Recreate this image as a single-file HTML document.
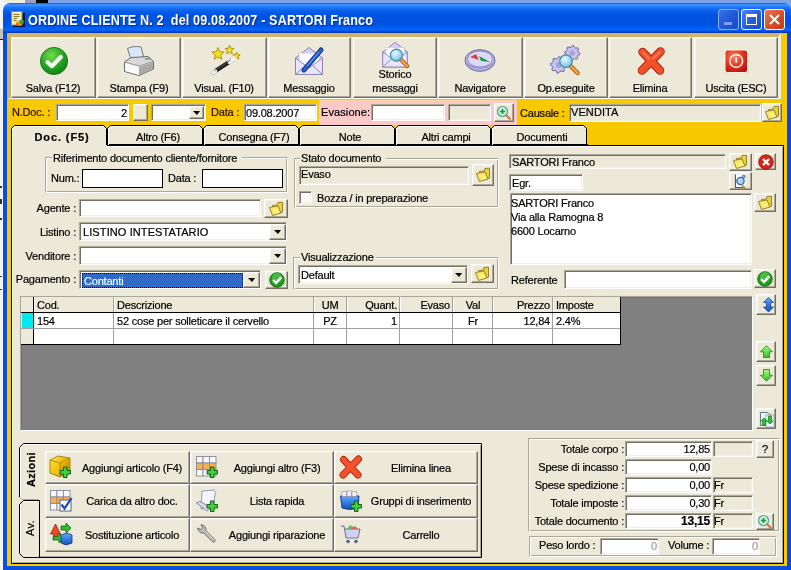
<!DOCTYPE html><html><head><meta charset="utf-8"><style>
*{box-sizing:border-box;margin:0;padding:0}
body{width:791px;height:570px;position:relative;overflow:hidden;font-family:"Liberation Sans",sans-serif;font-size:11px;color:#000;background:#fff}
.a{position:absolute}
.t{position:absolute;white-space:pre;line-height:13px;letter-spacing:-0.2px;-webkit-text-stroke:0.2px}
.sk{border:1px solid;border-color:#aca899 #fff #fff #aca899;box-shadow:inset 1px 1px 0 #716f64,inset -1px -1px 0 #f1efe2}
.rb{background:#ece9d8;border:1px solid;border-color:#fff #716f64 #716f64 #fff;box-shadow:inset -1px -1px 0 #aca899,inset 1px 1px 0 #f4f2e8}
.et{border:1px solid;border-color:#aca899 #fff #fff #aca899;box-shadow:inset 1px 1px 0 #fff,inset -1px -1px 0 #aca899}
.tri{position:absolute;left:50%;top:50%;margin-left:-4px;margin-top:-2px;width:0;height:0;border-left:4px solid transparent;border-right:3px solid transparent;border-top:4px solid #000}
</style></head><body>
<svg width="0" height="0" style="position:absolute"><defs>
<radialGradient id="gG" cx="0.4" cy="0.3" r="0.8"><stop offset="0" stop-color="#6fdc4a"/><stop offset="0.6" stop-color="#1e9e1e"/><stop offset="1" stop-color="#0f7a12"/></radialGradient>
<radialGradient id="gR" cx="0.4" cy="0.3" r="0.8"><stop offset="0" stop-color="#ff7a60"/><stop offset="0.6" stop-color="#e02a1a"/><stop offset="1" stop-color="#b01010"/></radialGradient>
<linearGradient id="gX" x1="0" y1="0" x2="1" y2="1"><stop offset="0" stop-color="#ff7a50"/><stop offset="1" stop-color="#e8301a"/></linearGradient>
<linearGradient id="gLav" x1="0" y1="0" x2="0" y2="1"><stop offset="0" stop-color="#d8d4f8"/><stop offset="1" stop-color="#b4b0e4"/></linearGradient>
<radialGradient id="gMag" cx="0.4" cy="0.35" r="0.7"><stop offset="0" stop-color="#e8fbff"/><stop offset="0.7" stop-color="#8ed2ea"/><stop offset="1" stop-color="#58a8c8"/></radialGradient>
<linearGradient id="gCube" x1="0" y1="0" x2="1" y2="1"><stop offset="0" stop-color="#fff060"/><stop offset="0.5" stop-color="#e8b400"/><stop offset="1" stop-color="#b07800"/></linearGradient>
<linearGradient id="gBlue" x1="0" y1="0" x2="0" y2="1"><stop offset="0" stop-color="#60a8ff"/><stop offset="1" stop-color="#1050c0"/></linearGradient>
<linearGradient id="gGreenA" x1="0" y1="0" x2="0" y2="1"><stop offset="0" stop-color="#a0ff80"/><stop offset="1" stop-color="#30c020"/></linearGradient>
</defs></svg>
<div style="position:absolute;left:0;top:0;width:791px;height:570px;will-change:transform;background:#fff">
<div class="a " style="left:0px;top:0px;width:791px;height:3px;background:#7ea2e6"></div>
<div class="a " style="left:0px;top:0px;width:3px;height:570px;background:#f4f4f0"></div>
<div class="a " style="left:3px;top:0px;width:22px;height:3px;background:#efeede"></div>
<div class="a " style="left:25px;top:0px;width:11px;height:3px;background:#9aa0c0"></div>
<div class="a " style="left:36px;top:0px;width:12px;height:3px;background:#000"></div>
<div class="a " style="left:740px;top:0px;width:51px;height:14px;background:#7ea2e6"></div>
<div class="a " style="left:0px;top:29px;width:3px;height:10px;background:#c4c0b8"></div>
<div class="a " style="left:0px;top:39px;width:3px;height:1px;background:#202020"></div>
<div class="a " style="left:0px;top:186px;width:2px;height:2px;background:#303030"></div>
<div class="a " style="left:0px;top:199px;width:2px;height:5px;background:#303030"></div>
<div class="a " style="left:0px;top:218px;width:2px;height:2px;background:#303030"></div>
<div class="a " style="left:0px;top:276px;width:2px;height:1px;background:#303030"></div>
<div class="a " style="left:0px;top:289px;width:2px;height:1px;background:#303030"></div>
<div class="a " style="left:3px;top:3px;width:788px;height:567px;background:linear-gradient(#0a3cc8 0,#3a8cff 1px,#3d95ff 2px,#2078f8 4px,#0a5eea 8px,#0054e3 12px,#0052e0 22px,#0062f6 26px,#0066ff 27px,#0058ec 28px,#0038b0 29px,#0038b0 30px,#0a4ee0 30px);border-radius:7px 7px 0 0"></div>
<div class="a " style="left:3px;top:33px;width:4px;height:537px;background:#0a4ee0"></div>
<div class="a " style="left:787px;top:33px;width:4px;height:537px;background:#0a46d8"></div>
<svg class="a" style="left:11px;top:11px" width="14" height="16" viewBox="0 0 14 16"><rect x="2" y="2" width="12" height="14" fill="#0a1850"/><rect x="0.5" y="0.5" width="10.5" height="13.5" fill="#f4ecb8" stroke="#a09040" stroke-width="1"/><path d="M2.5 3.5h6M2.5 5.5h6M2.5 7.5h4M2.5 9.5h3" stroke="#8a7a30" stroke-width="1"/><path d="M6 7 L10 6 L9 10 Z" fill="#fff"/><circle cx="7.5" cy="12" r="2.6" fill="#f0c020"/><circle cx="10.5" cy="11" r="2.4" fill="#40a040"/><circle cx="6.5" cy="13.2" r="1.4" fill="#e06020"/></svg>
<div class="t" style="left:28px;top:14px;font-size:14px;font-weight:700;color:#fff;letter-spacing:0.15px;text-shadow:1px 1px 0 #0a2a8a;transform:scaleX(0.9);transform-origin:0 0;-webkit-text-stroke:0">ORDINE CLIENTE N. 2&nbsp; del 09.08.2007 - SARTORI Franco</div>
<div class="a " style="left:718px;top:9px;width:21px;height:21px;border:1px solid #8ab0f4;border-radius:3px;background:linear-gradient(135deg,#3a6ee8,#1f55d4 60%,#1a4cc4)"><div class="a" style="left:5px;top:12px;width:8px;height:3px;background:#7c9ef0"></div></div>
<div class="a " style="left:741px;top:9px;width:21px;height:21px;border:1px solid #fff;border-radius:3px;background:linear-gradient(135deg,#4d82f0,#2159d8 60%,#1a4fc8)"><div class="a" style="left:4px;top:4px;width:11px;height:11px;border:1px solid #fff;border-top-width:3px"></div></div>
<div class="a " style="left:764px;top:9px;width:21px;height:21px;border:1px solid #fff;border-radius:3px;background:linear-gradient(135deg,#e8785a,#d64a22 60%,#c83a18)"><svg class="a" style="left:4px;top:4px" width="11" height="11"><path d="M1 1L10 10M10 1L1 10" stroke="#fff" stroke-width="2"/></svg></div>
<div class="a " style="left:7px;top:33px;width:780px;height:533px;background:#f9c900"></div>
<div class="a " style="left:7px;top:33px;width:774px;height:66px;background:#ece9d8;border-top:4px solid #d2b468;border-left:4px solid #d2b468;border-right:3px solid #f2efe4;border-bottom:1px solid #fff"></div>
<div class="a rb" style="left:11px;top:37px;width:85px;height:61px;"></div>
<div class="t" style="left:-247px;width:600px;text-align:center;top:82px;font-size:11px;font-weight:400;color:#000;">Salva (F12)</div>
<div class="a rb" style="left:97px;top:37px;width:84px;height:61px;"></div>
<div class="t" style="left:-161px;width:600px;text-align:center;top:82px;font-size:11px;font-weight:400;color:#000;">Stampa (F9)</div>
<div class="a rb" style="left:182px;top:37px;width:85px;height:61px;"></div>
<div class="t" style="left:-76px;width:600px;text-align:center;top:82px;font-size:11px;font-weight:400;color:#000;">Visual. (F10)</div>
<div class="a rb" style="left:268px;top:37px;width:83px;height:61px;"></div>
<div class="t" style="left:9px;width:600px;text-align:center;top:82px;font-size:11px;font-weight:400;color:#000;">Messaggio</div>
<div class="a rb" style="left:353px;top:37px;width:84px;height:61px;"></div>
<div class="t" style="left:95px;width:600px;text-align:center;top:68px;font-size:11px;font-weight:400;color:#000;">Storico</div>
<div class="t" style="left:95px;width:600px;text-align:center;top:82px;font-size:11px;font-weight:400;color:#000;">messaggi</div>
<div class="a rb" style="left:438px;top:37px;width:85px;height:61px;"></div>
<div class="t" style="left:180px;width:600px;text-align:center;top:82px;font-size:11px;font-weight:400;color:#000;">Navigatore</div>
<div class="a rb" style="left:524px;top:37px;width:84px;height:61px;"></div>
<div class="t" style="left:266px;width:600px;text-align:center;top:82px;font-size:11px;font-weight:400;color:#000;">Op.eseguite</div>
<div class="a rb" style="left:609px;top:37px;width:83px;height:61px;"></div>
<div class="t" style="left:350px;width:600px;text-align:center;top:82px;font-size:11px;font-weight:400;color:#000;">Elimina</div>
<div class="a rb" style="left:694px;top:37px;width:84px;height:61px;"></div>
<div class="t" style="left:436px;width:600px;text-align:center;top:82px;font-size:11px;font-weight:400;color:#000;">Uscita (ESC)</div>
<svg class="a" style="left:39px;top:46px" width="30" height="30" viewBox="0 0 30 30"><circle cx="15" cy="15" r="13.6" fill="url(#gG)" stroke="#0a6a10" stroke-width="0.8"/><path d="M8.6 16.2 L12.8 20.2 L21.8 11" fill="none" stroke="#f4fff0" stroke-width="4.2" stroke-linecap="round" stroke-linejoin="round"/></svg>
<svg class="a" style="left:122px;top:45px" width="34" height="32" viewBox="0 0 34 32"><path d="M5.5 3.5 C9 1.5 15 1 19 2 L22 13 C17 12 12 13 9 14.5 Z" fill="#dce8f8" stroke="#707888" stroke-width="1"/>
<path d="M2.5 17 L9 12.5 L26 11.5 L31.5 16.5 L31.5 24 L17 30.5 L2.5 26.5 Z" fill="#d8d8d8" stroke="#6a6a6a" stroke-width="1"/>
<path d="M2.5 17 L17 21 L31.5 16.5" fill="none" stroke="#9a9a9a" stroke-width="1"/>
<path d="M3 18 L17 22 L17 30 L3 26 Z" fill="#fafafa"/>
<path d="M17 22 L31 17.5 L31 24 L17 30 Z" fill="#a8a8a8"/>
<path d="M23 14 L28 13.5" stroke="#60a060" stroke-width="1.5"/></svg>
<svg class="a" style="left:210px;top:45px" width="32" height="32" viewBox="0 0 32 32"><polygon points="8.00,2.50 9.72,6.63 14.18,6.99 10.78,9.90 11.82,14.26 8.00,11.93 4.18,14.26 5.22,9.90 1.82,6.99 6.28,6.63" fill="#f4e020" stroke="#b09000" stroke-width="0.9" stroke-linejoin="round"/><polygon points="19.50,0.20 20.77,3.25 24.07,3.52 21.55,5.67 22.32,8.88 19.50,7.16 16.68,8.88 17.45,5.67 14.93,3.52 18.23,3.25" fill="#f4e020" stroke="#b09000" stroke-width="0.9" stroke-linejoin="round"/><polygon points="26.50,7.20 27.51,9.62 30.11,9.83 28.13,11.53 28.73,14.07 26.50,12.71 24.27,14.07 24.87,11.53 22.89,9.83 25.49,9.62" fill="#f4e020" stroke="#b09000" stroke-width="0.9" stroke-linejoin="round"/><path d="M3 27.5 L23 14.5" stroke="#202020" stroke-width="4.4" stroke-linecap="round"/><path d="M3 27.5 L5 26.2" stroke="#f0f0f0" stroke-width="4.4" stroke-linecap="round"/><path d="M19.5 16.8 L24.5 13.5" stroke="#f4f4f4" stroke-width="4.4" stroke-linecap="round"/><path d="M4 26 L21 15" stroke="#606060" stroke-width="0.8"/></svg>
<svg class="a" style="left:294px;top:46px" width="31" height="31" viewBox="0 0 31 31"><path d="M1.5 12 L15 1.5 L28.5 12 L28.5 28.5 L1.5 28.5 Z" fill="#d4d0f4" stroke="#8884b8" stroke-width="1"/>
<rect x="5" y="7" width="20" height="14" fill="#fbfbff" stroke="#c8c0d8" stroke-width="0.6"/>
<path d="M1.5 12 L15 22 L28.5 12 L28.5 28.5 L1.5 28.5 Z" fill="#e8e6fc" stroke="#8884b8" stroke-width="1"/>
<path d="M1.5 28.5 L12 19 M28.5 28.5 L18 19" stroke="#8884b8" stroke-width="1"/><path d="M10 24 L27 4" stroke="#0a2a80" stroke-width="5" stroke-linecap="round"/><path d="M10 24 L27 4" stroke="#2a60d0" stroke-width="3.2" stroke-linecap="round"/><path d="M13 20 L25 6" stroke="#80b0ff" stroke-width="0.9"/></svg>
<svg class="a" style="left:379.5px;top:41px" width="31" height="31" viewBox="0 0 31 34"><path d="M1.5 12 L15 1.5 L28.5 12 L28.5 28.5 L1.5 28.5 Z" fill="#d4d0f4" stroke="#8884b8" stroke-width="1"/>
<rect x="5" y="7" width="20" height="14" fill="#fbfbff" stroke="#c8c0d8" stroke-width="0.6"/>
<path d="M1.5 12 L15 22 L28.5 12 L28.5 28.5 L1.5 28.5 Z" fill="#e8e6fc" stroke="#8884b8" stroke-width="1"/>
<path d="M1.5 28.5 L12 19 M28.5 28.5 L18 19" stroke="#8884b8" stroke-width="1"/><path d="M16.5 15.5 L28.5 27.5" stroke="#a05818" stroke-width="4.4" stroke-linecap="round"/><path d="M16.5 15.5 L28.5 27.5" stroke="#f8a040" stroke-width="2.6" stroke-linecap="round"/><circle cx="16.5" cy="15.5" r="6.6" fill="url(#gMag)" stroke="#4a88a8" stroke-width="1.2"/></svg>
<svg class="a" style="left:464px;top:48px" width="32" height="26" viewBox="0 0 32 26"><ellipse cx="16" cy="12.5" rx="15" ry="10.8" fill="#b8b4e8" stroke="#6a66a0" stroke-width="1"/>
<ellipse cx="16" cy="11" rx="12.5" ry="8" fill="#dcdaf8" stroke="#8c88c0" stroke-width="1"/>
<path d="M6 9 L15 12 L12 6 Z" fill="#d84040"/><path d="M15 8 L26 14 L17 13 Z" fill="#1a9a40"/>
<path d="M2 15 Q16 26 30 15" fill="none" stroke="#9894d0" stroke-width="1.2"/></svg>
<svg class="a" style="left:550px;top:40px" width="34" height="36" viewBox="0 0 34 36"><polygon points="29.90,13.10 29.75,14.58 27.78,15.37 27.23,16.39 27.67,18.47 26.52,19.42 24.57,18.58 23.46,18.91 22.30,20.70 20.82,20.55 20.03,18.58 19.01,18.03 16.93,18.47 15.98,17.32 16.82,15.37 16.49,14.26 14.70,13.10 14.85,11.62 16.82,10.83 17.37,9.81 16.93,7.73 18.08,6.78 20.03,7.62 21.14,7.29 22.30,5.50 23.78,5.65 24.57,7.62 25.59,8.17 27.67,7.73 28.62,8.88 27.78,10.83 28.11,11.94" fill="#c8c4f0" stroke="#6a66a0" stroke-width="1"/><circle cx="22.3" cy="13.1" r="2.66" fill="#a8a4d8"/><polygon points="16.80,25.00 16.64,26.60 14.51,27.45 13.92,28.55 14.40,30.80 13.16,31.82 11.05,30.91 9.85,31.27 8.60,33.20 7.00,33.04 6.15,30.91 5.05,30.32 2.80,30.80 1.78,29.56 2.69,27.45 2.33,26.25 0.40,25.00 0.56,23.40 2.69,22.55 3.28,21.45 2.80,19.20 4.04,18.18 6.15,19.09 7.35,18.73 8.60,16.80 10.20,16.96 11.05,19.09 12.15,19.68 14.40,19.20 15.42,20.44 14.51,22.55 14.87,23.75" fill="#c8c4f0" stroke="#6a66a0" stroke-width="1"/><circle cx="8.6" cy="25" r="2.87" fill="#a8a4d8"/><path d="M16 21.2 L27.5 33" stroke="#a05818" stroke-width="4.4" stroke-linecap="round"/><path d="M16 21.2 L27.5 33" stroke="#f8a040" stroke-width="2.6" stroke-linecap="round"/><circle cx="16" cy="21.2" r="6.3" fill="url(#gMag)" stroke="#4a88a8" stroke-width="1.2"/></svg>
<svg class="a" style="left:637px;top:47px" width="29" height="29" viewBox="0 0 29 29"><path d="M5.5 5 L23 23.5 M23.5 4.5 L5 23.5" stroke="#a82010" stroke-width="8.6" stroke-linecap="round"/><path d="M5.5 5 L23 23.5 M23.5 4.5 L5 23.5" stroke="#f4502a" stroke-width="6.8" stroke-linecap="round"/><path d="M6 5.5 L12 11.5 M22.5 5.5 L16 11.5" stroke="#ff8a60" stroke-width="2" stroke-linecap="round" opacity="0.7"/></svg>
<svg class="a" style="left:724px;top:49px" width="25" height="25" viewBox="0 0 25 25"><rect x="1" y="1" width="22.5" height="22.5" rx="2.5" fill="url(#gR)" stroke="#fff4e0" stroke-width="1"/><circle cx="12.2" cy="12" r="6.4" fill="none" stroke="#fff0d8" stroke-width="1.6"/><path d="M12.2 8.5 V13.8" stroke="#fff0d8" stroke-width="2"/></svg>
<div class="t" style="left:12px;top:106px;font-size:11px;font-weight:400;color:#2a0800;">N.Doc. :</div>
<div class="a sk" style="left:56px;top:104px;width:73px;height:17px;background:#fff"></div>
<div class="t" style="left:-473px;width:600px;text-align:right;top:107px;font-size:11px;font-weight:400;color:#000;">2</div>
<div class="a rb" style="left:133px;top:104px;width:15px;height:17px;"></div>
<div class="a sk" style="left:151px;top:104px;width:55px;height:17px;background:#fff"></div>
<div class="a rb" style="left:189px;top:106px;width:15px;height:13px;"><div class="tri"></div></div>
<div class="t" style="left:211px;top:106px;font-size:11px;font-weight:400;color:#2a0800;">Data :</div>
<div class="a sk" style="left:244px;top:104px;width:73px;height:17px;background:#fff"></div>
<div class="t" style="left:246px;top:107px;font-size:11px;font-weight:400;color:#000;">09.08.2007</div>
<div class="a " style="left:319px;top:100px;width:198px;height:25px;background:#fdc8c8;border-top:2px solid #fbd49a"></div>
<div class="t" style="left:321px;top:106px;font-size:11px;font-weight:400;color:#000;letter-spacing:0.1px;">Evasione:</div>
<div class="a sk" style="left:371px;top:104px;width:74px;height:17px;background:#fff"></div>
<div class="a sk" style="left:448px;top:104px;width:43px;height:17px;background:#ece9d8"></div>
<div class="a rb" style="left:494px;top:103px;width:20px;height:19px;"><div style="position:absolute;left:0;top:0;right:0;bottom:0;display:flex;align-items:center;justify-content:center"><svg width="16" height="16" viewBox="0 0 16 16"><circle cx="6.5" cy="6.5" r="5" fill="#c8f0e8" stroke="#5a9a9a" stroke-width="1.2"/><path d="M4 6.5 H9 M6.5 4 V9" stroke="#10a010" stroke-width="1.6"/><path d="M10 10 L14.5 14.5" stroke="#c08050" stroke-width="2.2"/></svg></div></div>
<div class="t" style="left:520px;top:107px;font-size:11px;font-weight:400;color:#100400;">Causale :</div>
<div class="a sk" style="left:569px;top:104px;width:192px;height:18px;background:#ece9d8"></div>
<div class="t" style="left:571px;top:106px;font-size:11px;font-weight:400;color:#000;letter-spacing:0.1px;">VENDITA</div>
<div class="a rb" style="left:762px;top:103px;width:20px;height:19px;"><div style="position:absolute;left:0;top:0;right:0;bottom:0;display:flex;align-items:center;justify-content:center"><svg width="17" height="16" viewBox="0 0 17 16"><path d="M4.5 4.5 L9.5 4 L10 1.5 L14.5 1.2 L14.5 11.2 L5 13.5 Z" fill="#e8d040" stroke="#8c7a1c" stroke-width="0.9" stroke-linejoin="round"/><path d="M1.5 6.5 L10 5 L13 12 L4.5 14.5 Z" fill="#fbe868" stroke="#8c7a1c" stroke-width="0.9" stroke-linejoin="round"/><path d="M6 9 L10 8.3 L11.5 11.5 L7 12.5 Z" fill="#fff48c" opacity="0.8"/></svg></div></div>
<svg class="a" style="left:11px;top:125px" width="97" height="22" viewBox="0 0 97 22"><path d="M0.5 22 V3.5 L3.5 0.5 H92.5 L95.5 3.5 V22" fill="#ece9d8" stroke="#000"/><path d="M1.5 21 V3.9 L3.9 1.5 H92" fill="none" stroke="#fff"/></svg>
<div class="t" style="left:-238px;width:600px;text-align:center;top:131px;font-size:11px;font-weight:700;color:#000;letter-spacing:0.9px;">Doc. (F5)</div>
<svg class="a" style="left:107px;top:125px" width="97" height="21" viewBox="0 0 97 21"><path d="M0.5 21 V3.5 L3.5 0.5 H92.5 L95.5 3.5 V21" fill="#ece9d8" stroke="#000"/><path d="M0 19.5 H97" stroke="#000"/><path d="M1.5 20 V3.9 L3.9 1.5 H92" fill="none" stroke="#fff"/></svg>
<div class="t" style="left:-142px;width:600px;text-align:center;top:131px;font-size:11px;font-weight:400;color:#000;">Altro (F6)</div>
<svg class="a" style="left:203px;top:125px" width="97" height="21" viewBox="0 0 97 21"><path d="M0.5 21 V3.5 L3.5 0.5 H92.5 L95.5 3.5 V21" fill="#ece9d8" stroke="#000"/><path d="M0 19.5 H97" stroke="#000"/><path d="M1.5 20 V3.9 L3.9 1.5 H92" fill="none" stroke="#fff"/></svg>
<div class="t" style="left:-46px;width:600px;text-align:center;top:131px;font-size:11px;font-weight:400;color:#000;">Consegna (F7)</div>
<svg class="a" style="left:299px;top:125px" width="97" height="21" viewBox="0 0 97 21"><path d="M0.5 21 V3.5 L3.5 0.5 H92.5 L95.5 3.5 V21" fill="#ece9d8" stroke="#000"/><path d="M0 19.5 H97" stroke="#000"/><path d="M1.5 20 V3.9 L3.9 1.5 H92" fill="none" stroke="#fff"/></svg>
<div class="t" style="left:50px;width:600px;text-align:center;top:131px;font-size:11px;font-weight:400;color:#000;">Note</div>
<svg class="a" style="left:395px;top:125px" width="97" height="21" viewBox="0 0 97 21"><path d="M0.5 21 V3.5 L3.5 0.5 H92.5 L95.5 3.5 V21" fill="#ece9d8" stroke="#000"/><path d="M0 19.5 H97" stroke="#000"/><path d="M1.5 20 V3.9 L3.9 1.5 H92" fill="none" stroke="#fff"/></svg>
<div class="t" style="left:146px;width:600px;text-align:center;top:131px;font-size:11px;font-weight:400;color:#000;">Altri campi</div>
<svg class="a" style="left:491px;top:125px" width="97" height="21" viewBox="0 0 97 21"><path d="M0.5 21 V3.5 L3.5 0.5 H92.5 L95.5 3.5 V21" fill="#ece9d8" stroke="#000"/><path d="M0 19.5 H97" stroke="#000"/><path d="M1.5 20 V3.9 L3.9 1.5 H92" fill="none" stroke="#fff"/></svg>
<div class="t" style="left:242px;width:600px;text-align:center;top:131px;font-size:11px;font-weight:400;color:#000;">Documenti</div>
<div class="a " style="left:11px;top:145px;width:773px;height:419px;background:#ece9d8;border:1px solid #000;box-shadow:inset 1px 1px 0 #fff,inset -1px -1px 0 #aca899"></div>
<div class="a " style="left:12px;top:145px;width:95px;height:2px;background:#ece9d8"></div>
<div class="a " style="left:12px;top:145px;width:1px;height:2px;background:#fff"></div>
<div class="a et" style="left:45px;top:157px;width:243px;height:36px;"></div>
<div class="a " style="left:52px;top:152px;width:190px;height:10px;background:#ece9d8"></div>
<div class="t" style="left:53px;top:152px;font-size:11px;font-weight:400;color:#000;">Riferimento documento cliente/fornitore</div>
<div class="t" style="left:51px;top:172px;font-size:11px;font-weight:400;color:#000;">Num.:</div>
<div class="a " style="left:82px;top:169px;width:81px;height:19px;background:#fff;border:1px solid #000"></div>
<div class="t" style="left:168px;top:172px;font-size:11px;font-weight:400;color:#000;">Data :</div>
<div class="a " style="left:202px;top:169px;width:81px;height:19px;background:#fff;border:1px solid #000"></div>
<div class="t" style="left:-524px;width:600px;text-align:right;top:202px;font-size:11px;font-weight:400;color:#000;">Agente :</div>
<div class="a sk" style="left:79px;top:199px;width:182px;height:18px;background:#fff"></div>
<div class="a rb" style="left:264px;top:199px;width:24px;height:19px;"><div style="position:absolute;left:0;top:0;right:0;bottom:0;display:flex;align-items:center;justify-content:center"><svg width="17" height="16" viewBox="0 0 17 16"><path d="M4.5 4.5 L9.5 4 L10 1.5 L14.5 1.2 L14.5 11.2 L5 13.5 Z" fill="#e8d040" stroke="#8c7a1c" stroke-width="0.9" stroke-linejoin="round"/><path d="M1.5 6.5 L10 5 L13 12 L4.5 14.5 Z" fill="#fbe868" stroke="#8c7a1c" stroke-width="0.9" stroke-linejoin="round"/><path d="M6 9 L10 8.3 L11.5 11.5 L7 12.5 Z" fill="#fff48c" opacity="0.8"/></svg></div></div>
<div class="t" style="left:-524px;width:600px;text-align:right;top:226px;font-size:11px;font-weight:400;color:#000;">Listino :</div>
<div class="a sk" style="left:79px;top:222px;width:208px;height:19px;background:#fff"></div>
<div class="t" style="left:83px;top:226px;font-size:11px;font-weight:400;color:#000;letter-spacing:0.1px;">LISTINO INTESTATARIO</div>
<div class="a rb" style="left:269px;top:224px;width:17px;height:16px;"><div class="tri"></div></div>
<div class="t" style="left:-524px;width:600px;text-align:right;top:250px;font-size:11px;font-weight:400;color:#000;">Venditore :</div>
<div class="a sk" style="left:79px;top:246px;width:208px;height:19px;background:#fff"></div>
<div class="a rb" style="left:269px;top:248px;width:17px;height:16px;"><div class="tri"></div></div>
<div class="t" style="left:-524px;width:600px;text-align:right;top:273px;font-size:11px;font-weight:400;color:#000;">Pagamento :</div>
<div class="a sk" style="left:79px;top:270px;width:182px;height:19px;background:#fff"></div>
<div class="a " style="left:82px;top:273px;width:161px;height:15px;background:#316ac5;outline:1px dotted #000;outline-offset:-1px"></div>
<div class="t" style="left:84px;top:275px;font-size:11px;font-weight:400;color:#eaffff;">Contanti</div>
<div class="a rb" style="left:243px;top:272px;width:17px;height:16px;"><div class="tri"></div></div>
<div class="a rb" style="left:265px;top:271px;width:23px;height:18px;"><div style="position:absolute;left:0;top:0;right:0;bottom:0;display:flex;align-items:center;justify-content:center"><svg width="16" height="16" viewBox="0 0 16 16"><circle cx="8" cy="8" r="7.3" fill="#1f9a1f" stroke="#0c6a0c" stroke-width="0.8"/><circle cx="8" cy="6" r="5" fill="#5fd05f" opacity="0.6"/><path d="M4 8.2 L7 11 L12.2 5.2" fill="none" stroke="#fff" stroke-width="2.4"/></svg></div></div>
<div class="a et" style="left:294px;top:158px;width:205px;height:50px;"></div>
<div class="a " style="left:300px;top:153px;width:86px;height:10px;background:#ece9d8"></div>
<div class="t" style="left:301px;top:152px;font-size:11px;font-weight:400;color:#000;">Stato documento</div>
<div class="a sk" style="left:299px;top:166px;width:170px;height:19px;background:#ece9d8"></div>
<div class="t" style="left:301px;top:168px;font-size:11px;font-weight:400;color:#000;">Evaso</div>
<div class="a rb" style="left:472px;top:164px;width:22px;height:22px;"><div style="position:absolute;left:0;top:0;right:0;bottom:0;display:flex;align-items:center;justify-content:center"><svg width="17" height="16" viewBox="0 0 17 16"><path d="M4.5 4.5 L9.5 4 L10 1.5 L14.5 1.2 L14.5 11.2 L5 13.5 Z" fill="#e8d040" stroke="#8c7a1c" stroke-width="0.9" stroke-linejoin="round"/><path d="M1.5 6.5 L10 5 L13 12 L4.5 14.5 Z" fill="#fbe868" stroke="#8c7a1c" stroke-width="0.9" stroke-linejoin="round"/><path d="M6 9 L10 8.3 L11.5 11.5 L7 12.5 Z" fill="#fff48c" opacity="0.8"/></svg></div></div>
<div class="a sk" style="left:299px;top:191px;width:13px;height:13px;background:#fff"></div>
<div class="t" style="left:317px;top:192px;font-size:11px;font-weight:400;color:#000;">Bozza / in preparazione</div>
<div class="a et" style="left:293px;top:257px;width:206px;height:33px;"></div>
<div class="a " style="left:300px;top:252px;width:76px;height:10px;background:#ece9d8"></div>
<div class="t" style="left:301px;top:251px;font-size:11px;font-weight:400;color:#000;">Visualizzazione</div>
<div class="a sk" style="left:298px;top:265px;width:170px;height:19px;background:#fff"></div>
<div class="t" style="left:301px;top:269px;font-size:11px;font-weight:400;color:#000;">Default</div>
<div class="a rb" style="left:451px;top:267px;width:16px;height:16px;"><div class="tri"></div></div>
<div class="a rb" style="left:471px;top:264px;width:23px;height:19px;"><div style="position:absolute;left:0;top:0;right:0;bottom:0;display:flex;align-items:center;justify-content:center"><svg width="17" height="16" viewBox="0 0 17 16"><path d="M4.5 4.5 L9.5 4 L10 1.5 L14.5 1.2 L14.5 11.2 L5 13.5 Z" fill="#e8d040" stroke="#8c7a1c" stroke-width="0.9" stroke-linejoin="round"/><path d="M1.5 6.5 L10 5 L13 12 L4.5 14.5 Z" fill="#fbe868" stroke="#8c7a1c" stroke-width="0.9" stroke-linejoin="round"/><path d="M6 9 L10 8.3 L11.5 11.5 L7 12.5 Z" fill="#fff48c" opacity="0.8"/></svg></div></div>
<div class="a sk" style="left:509px;top:154px;width:217px;height:15px;background:#ece9d8"></div>
<div class="t" style="left:512px;top:156px;font-size:11px;font-weight:400;color:#000;">SARTORI Franco</div>
<div class="a rb" style="left:729px;top:153px;width:23px;height:18px;"><div style="position:absolute;left:0;top:0;right:0;bottom:0;display:flex;align-items:center;justify-content:center"><svg width="17" height="16" viewBox="0 0 17 16"><path d="M4.5 4.5 L9.5 4 L10 1.5 L14.5 1.2 L14.5 11.2 L5 13.5 Z" fill="#e8d040" stroke="#8c7a1c" stroke-width="0.9" stroke-linejoin="round"/><path d="M1.5 6.5 L10 5 L13 12 L4.5 14.5 Z" fill="#fbe868" stroke="#8c7a1c" stroke-width="0.9" stroke-linejoin="round"/><path d="M6 9 L10 8.3 L11.5 11.5 L7 12.5 Z" fill="#fff48c" opacity="0.8"/></svg></div></div>
<div class="a rb" style="left:755px;top:153px;width:21px;height:17px;"><div style="position:absolute;left:0;top:0;right:0;bottom:0;display:flex;align-items:center;justify-content:center"><svg width="16" height="16" viewBox="0 0 16 16"><circle cx="8" cy="8" r="7.3" fill="#d8241a" stroke="#9a1010" stroke-width="0.8"/><path d="M5 5 L11 11 M11 5 L5 11" stroke="#fff" stroke-width="2.4"/></svg></div></div>
<div class="a sk" style="left:509px;top:174px;width:74px;height:17px;background:#fff"></div>
<div class="t" style="left:512px;top:177px;font-size:11px;font-weight:400;color:#000;">Egr.</div>
<div class="a rb" style="left:729px;top:172px;width:23px;height:18px;"><div style="position:absolute;left:0;top:0;right:0;bottom:0;display:flex;align-items:center;justify-content:center"><svg width="16" height="16" viewBox="0 0 16 16"><path d="M2.5 1.5 V14.5 H13" fill="none" stroke="#505868" stroke-width="1.2"/><rect x="3" y="1.5" width="10" height="12.5" fill="#f8fbff"/><path d="M9 12 L12.5 15.5" stroke="#d09060" stroke-width="2"/><circle cx="7.5" cy="8" r="3.6" fill="#b0d4f4" stroke="#3a6aa8" stroke-width="1.4"/><circle cx="10.8" cy="3.6" r="1.5" fill="#80b0e0" stroke="#3a6aa8" stroke-width="0.8"/></svg></div></div>
<div class="a sk" style="left:510px;top:193px;width:242px;height:72px;background:#fff"></div>
<div class="t" style="left:511px;top:197px;font-size:11px;font-weight:400;color:#000;">SARTORI Franco</div>
<div class="t" style="left:511px;top:211px;font-size:11px;font-weight:400;color:#000;">Via alla Ramogna 8</div>
<div class="t" style="left:511px;top:225px;font-size:11px;font-weight:400;color:#000;">6600 Locarno</div>
<div class="a rb" style="left:754px;top:193px;width:22px;height:19px;"><div style="position:absolute;left:0;top:0;right:0;bottom:0;display:flex;align-items:center;justify-content:center"><svg width="17" height="16" viewBox="0 0 17 16"><path d="M4.5 4.5 L9.5 4 L10 1.5 L14.5 1.2 L14.5 11.2 L5 13.5 Z" fill="#e8d040" stroke="#8c7a1c" stroke-width="0.9" stroke-linejoin="round"/><path d="M1.5 6.5 L10 5 L13 12 L4.5 14.5 Z" fill="#fbe868" stroke="#8c7a1c" stroke-width="0.9" stroke-linejoin="round"/><path d="M6 9 L10 8.3 L11.5 11.5 L7 12.5 Z" fill="#fff48c" opacity="0.8"/></svg></div></div>
<div class="t" style="left:511px;top:274px;font-size:11px;font-weight:400;color:#000;">Referente</div>
<div class="a sk" style="left:564px;top:270px;width:188px;height:19px;background:#fff"></div>
<div class="a rb" style="left:754px;top:269px;width:22px;height:19px;"><div style="position:absolute;left:0;top:0;right:0;bottom:0;display:flex;align-items:center;justify-content:center"><svg width="16" height="16" viewBox="0 0 16 16"><circle cx="8" cy="8" r="7.3" fill="#1f9a1f" stroke="#0c6a0c" stroke-width="0.8"/><circle cx="8" cy="6" r="5" fill="#5fd05f" opacity="0.6"/><path d="M4 8.2 L7 11 L12.2 5.2" fill="none" stroke="#fff" stroke-width="2.4"/></svg></div></div>
<div class="a " style="left:20px;top:296px;width:733px;height:135px;background:#808080;border:1px solid;border-color:#aca899 #fff #fff #aca899;box-shadow:inset 1px 1px 0 #716f64"></div>
<div class="a " style="left:21px;top:297px;width:599px;height:15px;background:#ece9d8"></div>
<div class="a " style="left:21px;top:312px;width:599px;height:33px;background:#fff"></div>
<div class="a " style="left:21px;top:312px;width:12px;height:33px;background:#ece9d8"></div>
<div class="a " style="left:22px;top:313px;width:11px;height:16px;background:#00e8f0"></div>
<div class="a " style="left:33px;top:297px;width:1px;height:48px;background:#a0a0a0"></div>
<div class="a " style="left:34px;top:297px;width:1px;height:15px;background:#fff"></div>
<div class="a " style="left:113px;top:297px;width:1px;height:48px;background:#a0a0a0"></div>
<div class="a " style="left:114px;top:297px;width:1px;height:15px;background:#fff"></div>
<div class="a " style="left:313px;top:297px;width:1px;height:48px;background:#a0a0a0"></div>
<div class="a " style="left:314px;top:297px;width:1px;height:15px;background:#fff"></div>
<div class="a " style="left:346px;top:297px;width:1px;height:48px;background:#a0a0a0"></div>
<div class="a " style="left:347px;top:297px;width:1px;height:15px;background:#fff"></div>
<div class="a " style="left:399px;top:297px;width:1px;height:48px;background:#a0a0a0"></div>
<div class="a " style="left:400px;top:297px;width:1px;height:15px;background:#fff"></div>
<div class="a " style="left:452px;top:297px;width:1px;height:48px;background:#a0a0a0"></div>
<div class="a " style="left:453px;top:297px;width:1px;height:15px;background:#fff"></div>
<div class="a " style="left:492px;top:297px;width:1px;height:48px;background:#a0a0a0"></div>
<div class="a " style="left:493px;top:297px;width:1px;height:15px;background:#fff"></div>
<div class="a " style="left:552px;top:297px;width:1px;height:48px;background:#a0a0a0"></div>
<div class="a " style="left:553px;top:297px;width:1px;height:15px;background:#fff"></div>
<div class="a " style="left:33px;top:297px;width:1px;height:48px;background:#000"></div>
<div class="a " style="left:21px;top:312px;width:599px;height:1px;background:#000"></div>
<div class="a " style="left:21px;top:328px;width:599px;height:1px;background:#a0a0a0"></div>
<div class="a " style="left:21px;top:344px;width:600px;height:1px;background:#000"></div>
<div class="a " style="left:620px;top:297px;width:1px;height:48px;background:#000"></div>
<div class="t" style="left:37px;top:299px;font-size:11px;font-weight:400;color:#000;">Cod.</div>
<div class="t" style="left:37px;top:315px;font-size:11px;font-weight:400;color:#000;">154</div>
<div class="t" style="left:117px;top:299px;font-size:11px;font-weight:400;color:#000;">Descrizione</div>
<div class="t" style="left:117px;top:315px;font-size:11px;font-weight:400;color:#000;">52 cose per solleticare il cervello</div>
<div class="t" style="left:30px;width:600px;text-align:center;top:299px;font-size:11px;font-weight:400;color:#000;">UM</div>
<div class="t" style="left:30px;width:600px;text-align:center;top:315px;font-size:11px;font-weight:400;color:#000;">PZ</div>
<div class="t" style="left:-203px;width:600px;text-align:right;top:299px;font-size:11px;font-weight:400;color:#000;">Quant.</div>
<div class="t" style="left:-203px;width:600px;text-align:right;top:315px;font-size:11px;font-weight:400;color:#000;">1</div>
<div class="t" style="left:-150px;width:600px;text-align:right;top:299px;font-size:11px;font-weight:400;color:#000;">Evaso</div>
<div class="t" style="left:173px;width:600px;text-align:center;top:299px;font-size:11px;font-weight:400;color:#000;">Val</div>
<div class="t" style="left:173px;width:600px;text-align:center;top:315px;font-size:11px;font-weight:400;color:#000;">Fr</div>
<div class="t" style="left:-50px;width:600px;text-align:right;top:299px;font-size:11px;font-weight:400;color:#000;">Prezzo</div>
<div class="t" style="left:-50px;width:600px;text-align:right;top:315px;font-size:11px;font-weight:400;color:#000;">12,84</div>
<div class="t" style="left:556px;top:299px;font-size:11px;font-weight:400;color:#000;">Imposte</div>
<div class="t" style="left:556px;top:315px;font-size:11px;font-weight:400;color:#000;">2.4%</div>
<div class="a rb" style="left:756px;top:294px;width:20px;height:21px;"></div>
<div class="a rb" style="left:756px;top:341px;width:20px;height:21px;"></div>
<div class="a rb" style="left:756px;top:365px;width:20px;height:21px;"></div>
<div class="a rb" style="left:756px;top:408px;width:20px;height:21px;"></div>
<svg class="a" style="left:762px;top:297px" width="13" height="16" viewBox="0 0 13 16"><path d="M6.5 0.5 L11.5 5.5 L8.5 5.5 L8.5 10 L11.5 10 L6.5 15 L1.5 10 L4.5 10 L4.5 5.5 L1.5 5.5 Z" fill="url(#gBlue)" stroke="#1040a0" stroke-width="0.8" stroke-linejoin="round"/></svg>
<svg class="a" style="left:760px;top:345px" width="13" height="13" viewBox="0 0 13 13"><path d="M6.5 0.8 L12.5 6.8 L9.5 6.8 L9.5 12.5 L3.5 12.5 L3.5 6.8 L0.5 6.8 Z" fill="url(#gGreenA)" stroke="#208010" stroke-width="0.8" stroke-linejoin="round"/></svg>
<svg class="a" style="left:760px;top:369px" width="13" height="13" viewBox="0 0 13 13"><path d="M6.5 12.2 L12.5 6.2 L9.5 6.2 L9.5 0.5 L3.5 0.5 L3.5 6.2 L0.5 6.2 Z" fill="url(#gGreenA)" stroke="#208010" stroke-width="0.8" stroke-linejoin="round"/></svg>
<svg class="a" style="left:759px;top:411px" width="16" height="17" viewBox="0 0 16 17"><path d="M1.5 1.5 L9 1.5 L12 4.5 L12 14.5 L1.5 14.5 Z" fill="#e0f4fc" stroke="#606878" stroke-width="0.9"/><path d="M7 4 L15 4 L15 16 L7 16 Z" fill="#e8f8ff" stroke="#707888" stroke-width="0.6"/><path d="M5 7 L8 10 L6.5 10 L6.5 14 L3.5 14 L3.5 10 L2 10 Z" fill="#30c030" stroke="#108010" stroke-width="0.7"/><path d="M11 13 L14 10 L12.5 10 L12.5 5 L9.5 5 L9.5 10 L8 10 Z" fill="#30c030" stroke="#108010" stroke-width="0.7"/></svg>
<svg class="a" style="left:0;top:0" width="791" height="570"><path d="M19.5 497 V447.5 L23.5 443.5 H481.5 V557.5 H23.5 L19.5 553.5 V504.5 L23.5 500.5 H39.5 V557.5" fill="#ece9d8" stroke="#000"/><path d="M480.5 445 V556.5 H40" fill="none" stroke="#aca899"/><path d="M19.5 497 L22 499.5 H39" fill="none" stroke="#aca899"/><path d="M20.5 497 V448 L24 444.5 H481" fill="none" stroke="#fff"/><path d="M20.5 504.5 V553 M24 501.5 H38.5" fill="none" stroke="#fff"/></svg>
<div class="t" style="left:25px;top:487px;font-weight:700;transform:rotate(-90deg);transform-origin:0 0;letter-spacing:0.3px">Azioni</div>
<div class="t" style="left:24px;top:536px;transform:rotate(-90deg);transform-origin:0 0;letter-spacing:0.4px">Av.</div>
<div class="a rb" style="left:45px;top:451px;width:145px;height:33px;"></div>
<div class="t" style="left:-168px;width:600px;text-align:center;top:462px;font-size:11px;font-weight:400;color:#000;">Aggiungi articolo (F4)</div>
<div class="a rb" style="left:190px;top:451px;width:144px;height:33px;"></div>
<div class="t" style="left:-23px;width:600px;text-align:center;top:462px;font-size:11px;font-weight:400;color:#000;">Aggiungi altro (F3)</div>
<div class="a rb" style="left:334px;top:451px;width:144px;height:33px;"></div>
<div class="t" style="left:121px;width:600px;text-align:center;top:462px;font-size:11px;font-weight:400;color:#000;">Elimina linea</div>
<div class="a rb" style="left:45px;top:484px;width:145px;height:34px;"></div>
<div class="t" style="left:-168px;width:600px;text-align:center;top:495px;font-size:11px;font-weight:400;color:#000;">Carica da altro doc.</div>
<div class="a rb" style="left:190px;top:484px;width:144px;height:34px;"></div>
<div class="t" style="left:-23px;width:600px;text-align:center;top:495px;font-size:11px;font-weight:400;color:#000;">Lista rapida</div>
<div class="a rb" style="left:334px;top:484px;width:144px;height:34px;"></div>
<div class="t" style="left:121px;width:600px;text-align:center;top:495px;font-size:11px;font-weight:400;color:#000;">Gruppi di inserimento</div>
<div class="a rb" style="left:45px;top:518px;width:145px;height:34px;"></div>
<div class="t" style="left:-168px;width:600px;text-align:center;top:529px;font-size:11px;font-weight:400;color:#000;">Sostituzione articolo</div>
<div class="a rb" style="left:190px;top:518px;width:144px;height:34px;"></div>
<div class="t" style="left:-23px;width:600px;text-align:center;top:529px;font-size:11px;font-weight:400;color:#000;">Aggiungi riparazione</div>
<div class="a rb" style="left:334px;top:518px;width:144px;height:34px;"></div>
<div class="t" style="left:121px;width:600px;text-align:center;top:529px;font-size:11px;font-weight:400;color:#000;">Carrello</div>
<svg class="a" style="left:48px;top:455px" width="24" height="24" viewBox="0 0 24 24"><path d="M2 5 L10 1 L22 3 L22 17 L12 22 L2 18 Z" fill="url(#gCube)" stroke="#9a7000" stroke-width="0.8"/><path d="M2 5 L12 8 L22 3 M12 8 V22" fill="none" stroke="#b08400" stroke-width="0.8"/><path d="M3 6 L11 8.5 L11 20.5 L3 17.5 Z" fill="#f8d020" opacity="0.6"/><path d="M15.5 12 h3.5 v3.5 h3.5 v3.5 h-3.5 v3.5 h-3.5 v-3.5 h-3.5 v-3.5 h3.5 Z" fill="#40d040" stroke="#106010" stroke-width="1" stroke-linejoin="round"/></svg>
<svg class="a" style="left:195px;top:455px" width="24" height="24" viewBox="0 0 24 24"><rect x="1.5" y="1.5" width="6.5" height="6.5" fill="#f8f8ff" stroke="#8a8aa0" stroke-width="0.9"/><rect x="8.0" y="1.5" width="6.5" height="6.5" fill="#f8f8ff" stroke="#8a8aa0" stroke-width="0.9"/><rect x="14.5" y="1.5" width="6.5" height="6.5" fill="#f8f8ff" stroke="#8a8aa0" stroke-width="0.9"/><rect x="1.5" y="8.0" width="6.5" height="6.5" fill="#f8b050" stroke="#8a8aa0" stroke-width="0.9"/><rect x="8.0" y="8.0" width="6.5" height="6.5" fill="#f8b050" stroke="#8a8aa0" stroke-width="0.9"/><rect x="14.5" y="8.0" width="6.5" height="6.5" fill="#f8b050" stroke="#8a8aa0" stroke-width="0.9"/><rect x="1.5" y="14.5" width="6.5" height="6.5" fill="#f8f8ff" stroke="#8a8aa0" stroke-width="0.9"/><rect x="8.0" y="14.5" width="6.5" height="6.5" fill="#f8f8ff" stroke="#8a8aa0" stroke-width="0.9"/><rect x="14.5" y="14.5" width="6.5" height="6.5" fill="#f8f8ff" stroke="#8a8aa0" stroke-width="0.9"/><path d="M15.5 12 h3.5 v3.5 h3.5 v3.5 h-3.5 v3.5 h-3.5 v-3.5 h-3.5 v-3.5 h3.5 Z" fill="#40d040" stroke="#106010" stroke-width="1" stroke-linejoin="round"/></svg>
<svg class="a" style="left:339px;top:455px" width="24" height="24" viewBox="0 0 24 24"><path d="M4.5 4.5 L19 20 M19.5 4 L4 20" stroke="#a82010" stroke-width="7" stroke-linecap="round"/><path d="M4.5 4.5 L19 20 M19.5 4 L4 20" stroke="#f4502a" stroke-width="5.4" stroke-linecap="round"/></svg>
<svg class="a" style="left:49px;top:489px" width="24" height="24" viewBox="0 0 24 24"><rect x="1.5" y="1.5" width="6.5" height="6.5" fill="#f8f8ff" stroke="#8a8aa0" stroke-width="0.9"/><rect x="8.0" y="1.5" width="6.5" height="6.5" fill="#f8f8ff" stroke="#8a8aa0" stroke-width="0.9"/><rect x="14.5" y="1.5" width="6.5" height="6.5" fill="#f8f8ff" stroke="#8a8aa0" stroke-width="0.9"/><rect x="1.5" y="8.0" width="6.5" height="6.5" fill="#f8b050" stroke="#8a8aa0" stroke-width="0.9"/><rect x="8.0" y="8.0" width="6.5" height="6.5" fill="#f8b050" stroke="#8a8aa0" stroke-width="0.9"/><rect x="14.5" y="8.0" width="6.5" height="6.5" fill="#f8b050" stroke="#8a8aa0" stroke-width="0.9"/><rect x="1.5" y="14.5" width="6.5" height="6.5" fill="#f8f8ff" stroke="#8a8aa0" stroke-width="0.9"/><rect x="8.0" y="14.5" width="6.5" height="6.5" fill="#f8f8ff" stroke="#8a8aa0" stroke-width="0.9"/><rect x="14.5" y="14.5" width="6.5" height="6.5" fill="#f8f8ff" stroke="#8a8aa0" stroke-width="0.9"/><rect x="11" y="11" width="11" height="11" fill="#fff" stroke="#506080"/><path d="M12.5 15.5 L15.5 19.5 L22.5 9" fill="none" stroke="#1a4ab0" stroke-width="2.2"/></svg>
<svg class="a" style="left:195px;top:489px" width="24" height="24" viewBox="0 0 24 24"><path d="M7 2 L19 1 Q22 3 20 6 L18 18 L6 20 Z" fill="#f4f4fc" stroke="#9090a8" stroke-width="0.9"/><path d="M1.5 14 Q4 11 8 14 L16 19 L12 22 Z" fill="#d8d8e4" stroke="#8080a0" stroke-width="0.9"/><path d="M15.5 12 h3.5 v3.5 h3.5 v3.5 h-3.5 v3.5 h-3.5 v-3.5 h-3.5 v-3.5 h3.5 Z" fill="#40d040" stroke="#106010" stroke-width="1" stroke-linejoin="round"/></svg>
<svg class="a" style="left:339px;top:489px" width="24" height="24" viewBox="0 0 24 24"><path d="M1.5 7 L20 7 L19 19 Q11 22 3 19 Z" fill="url(#gBlue)" stroke="#103080" stroke-width="0.9"/><rect x="3" y="2.5" width="4.5" height="5" fill="#f0f0f8" stroke="#9090a0" stroke-width="0.6"/><rect x="8" y="2" width="4.5" height="5.5" fill="#f0f0f8" stroke="#9090a0" stroke-width="0.6"/><rect x="13" y="2.5" width="4.5" height="5" fill="#f0f0f8" stroke="#9090a0" stroke-width="0.6"/><path d="M15.5 12 h3.5 v3.5 h3.5 v3.5 h-3.5 v3.5 h-3.5 v-3.5 h-3.5 v-3.5 h3.5 Z" fill="#40d040" stroke="#106010" stroke-width="1" stroke-linejoin="round"/></svg>
<svg class="a" style="left:49px;top:522px" width="24" height="24" viewBox="0 0 24 24"><path d="M1.5 12 L6.5 2 L11.5 12 L8.5 12 L8.5 16 L4.5 16 L4.5 12 Z" fill="#f04828" stroke="#902010" stroke-width="0.8"/><path d="M4 15 L10 14 L10 11 L15 16 L10 21 L10 18 L4 18 Z" fill="#30c030" stroke="#106010" stroke-width="0.8"/><path d="M12 4 L17 4 L17 1 L22 6 L17 11 L17 8 L12 8 Z" fill="#30c030" stroke="#106010" stroke-width="0.8"/><path d="M12 13 L18 11 L23 13 L23 21 L17 23 L12 21 Z" fill="url(#gBlue)" stroke="#103080" stroke-width="0.8"/></svg>
<svg class="a" style="left:195px;top:522px" width="24" height="24" viewBox="0 0 24 24"><g transform="rotate(45 12 12)"><path d="M1.2 9.6 A5.2 5.2 0 0 1 9 10.4 H21.2 A1.6 1.6 0 0 1 21.2 13.6 H9 A5.2 5.2 0 0 1 1.2 14.4 L4.6 13.1 V10.9 Z" fill="#bcbcbc" stroke="#686868" stroke-width="0.9" stroke-linejoin="round"/><path d="M9.5 11.3 H20.5" stroke="#e8e8e8" stroke-width="0.8"/></g></svg>
<svg class="a" style="left:339px;top:522px" width="24" height="24" viewBox="0 0 24 24"><path d="M2 4 L5 4 L7 16 L19 16 L21 7 L6 7" fill="#d0d0f0" stroke="#707090" stroke-width="1"/><path d="M8 7 L11 3 L15 5 L13 8 Z" fill="#60c060"/><path d="M12 7 L16 4 L19 7 Z" fill="#e06060"/><circle cx="9" cy="19.5" r="1.8" fill="#606080"/><circle cx="17" cy="19.5" r="1.8" fill="#606080"/></svg>
<div class="a et" style="left:528px;top:438px;width:252px;height:94px;"></div>
<div class="t" style="left:24px;width:600px;text-align:right;top:443px;font-size:11px;font-weight:400;color:#000;">Totale corpo :</div>
<div class="a sk" style="left:625px;top:441px;width:87px;height:16px;background:#fff"></div>
<div class="t" style="left:110px;width:600px;text-align:right;top:443px;font-size:11px;font-weight:400;color:#000;">12,85</div>
<div class="a sk" style="left:713px;top:441px;width:40px;height:16px;background:#ece9d8"></div>
<div class="t" style="left:24px;width:600px;text-align:right;top:461px;font-size:11px;font-weight:400;color:#000;">Spese di incasso :</div>
<div class="a sk" style="left:625px;top:459px;width:87px;height:16px;background:#fff"></div>
<div class="t" style="left:110px;width:600px;text-align:right;top:461px;font-size:11px;font-weight:400;color:#000;">0,00</div>
<div class="t" style="left:24px;width:600px;text-align:right;top:479px;font-size:11px;font-weight:400;color:#000;">Spese spedizione :</div>
<div class="a sk" style="left:625px;top:477px;width:87px;height:16px;background:#fff"></div>
<div class="t" style="left:110px;width:600px;text-align:right;top:479px;font-size:11px;font-weight:400;color:#000;">0,00</div>
<div class="a sk" style="left:713px;top:477px;width:40px;height:16px;background:#ece9d8"></div>
<div class="t" style="left:714px;top:479px;font-size:11px;font-weight:400;color:#000;">Fr</div>
<div class="t" style="left:24px;width:600px;text-align:right;top:497px;font-size:11px;font-weight:400;color:#000;">Totale imposte :</div>
<div class="a sk" style="left:625px;top:495px;width:87px;height:16px;background:#fff"></div>
<div class="t" style="left:110px;width:600px;text-align:right;top:497px;font-size:11px;font-weight:400;color:#000;">0,30</div>
<div class="a sk" style="left:713px;top:495px;width:40px;height:16px;background:#ece9d8"></div>
<div class="t" style="left:714px;top:497px;font-size:11px;font-weight:400;color:#000;">Fr</div>
<div class="t" style="left:24px;width:600px;text-align:right;top:515px;font-size:11px;font-weight:400;color:#000;">Totale documento :</div>
<div class="a sk" style="left:625px;top:513px;width:87px;height:16px;background:#fff"></div>
<div class="t" style="left:110px;width:600px;text-align:right;top:515px;font-size:12px;font-weight:700;color:#000;">13,15</div>
<div class="a sk" style="left:713px;top:513px;width:40px;height:16px;background:#ece9d8"></div>
<div class="t" style="left:714px;top:515px;font-size:11px;font-weight:400;color:#000;">Fr</div>
<div class="a rb" style="left:756px;top:440px;width:18px;height:18px;"><div class="t" style="left:0;width:16px;text-align:center;top:2px">?</div></div>
<div class="a rb" style="left:756px;top:513px;width:18px;height:17px;"><div style="position:absolute;left:0;top:0;right:0;bottom:0;display:flex;align-items:center;justify-content:center"><svg width="16" height="16" viewBox="0 0 16 16"><circle cx="6.5" cy="6.5" r="5" fill="#c8f0e8" stroke="#5a9a9a" stroke-width="1.2"/><path d="M4 6.5 H9 M6.5 4 V9" stroke="#10a010" stroke-width="1.6"/><path d="M10 10 L14.5 14.5" stroke="#c08050" stroke-width="2.2"/></svg></div></div>
<div class="a et" style="left:529px;top:536px;width:248px;height:21px;"></div>
<div class="t" style="left:539px;top:539px;font-size:11px;font-weight:400;color:#000;">Peso lordo :</div>
<div class="a sk" style="left:600px;top:538px;width:59px;height:17px;background:#fff"></div>
<div class="t" style="left:57px;width:600px;text-align:right;top:540px;font-size:11px;font-weight:400;color:#a0a0a0;">0</div>
<div class="t" style="left:668px;top:539px;font-size:11px;font-weight:400;color:#000;">Volume :</div>
<div class="a sk" style="left:712px;top:538px;width:48px;height:17px;background:#fff"></div>
<div class="t" style="left:158px;width:600px;text-align:right;top:540px;font-size:11px;font-weight:400;color:#a0a0a0;">0</div>
</div></body></html>
